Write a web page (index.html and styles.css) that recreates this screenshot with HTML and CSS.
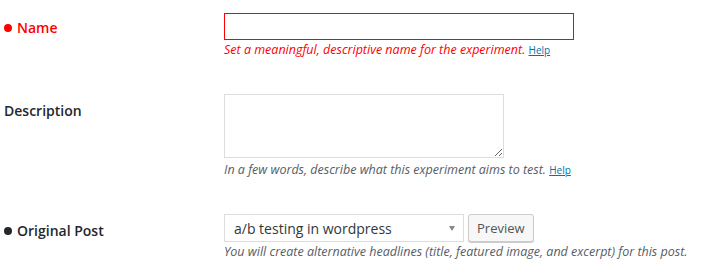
FILE: index.html
```html
<!DOCTYPE html>
<html lang="en">
  <head>
    <meta charset="UTF-8" />
    <meta name="viewport" content="width=device-width, initial-scale=1.0" />
    <title>Experiment</title>
    <link rel="stylesheet" href="styles.css">
  </head>
  <body>
    <form class="experiment-form" novalidate>
      <div class="form-row has-error">
        <label class="form-label is-required" for="exp-name">Name</label>
        <div class="form-field">
          <input type="text" id="exp-name" class="field-name" />
          <p class="form-help">
            Set a meaningful, descriptive name for the experiment.
            <a href="#">Help</a>
          </p>
        </div>
      </div>
      <div class="form-row">
        <label class="form-label" for="exp-desc">Description</label>
        <div class="form-field">
          <textarea id="exp-desc" class="field-desc"></textarea>
          <p class="form-help">
            In a few words, describe what this experiment aims to test.
            <a href="#">Help</a>
          </p>
        </div>
      </div>
      <div class="form-row">
        <label class="form-label is-required" for="exp-post">Original Post</label>
        <div class="form-field">
          <div class="post-picker">
            <div class="select-box" id="exp-post">
              <span>a/b testing in wordpress</span>
              <span class="select-arrow"></span>
            </div>
            <button type="button" class="btn">Preview</button>
          </div>
          <p class="form-help">
            You will create alternative headlines (title, featured image, and excerpt) for this post.
          </p>
        </div>
      </div>
    </form>
  </body>
</html>
```

FILE: styles.css
```css
body {
  margin: 0;
  background-color: #fff;
  font-family: 'Open Sans', 'Noto Sans', sans-serif;
  color: #23282d;
}

a {
  color: #0073aa;
}

.experiment-form {
  padding: 13px 0 0 4px;
}

.form-row {
  display: grid;
  grid-template-columns: 220px 1fr;
  margin-bottom: 35px;
}

.form-row:last-child {
  margin-bottom: 0;
}

.form-label {
  padding-top: 7px;
  font-size: 14px;
  font-weight: 600;
  line-height: 20px;
}

.form-label.is-required::before {
  content: '';
  display: inline-block;
  width: 8px;
  height: 8px;
  border-radius: 50%;
  background-color: currentColor;
  margin-right: 5px;
  vertical-align: 1px;
}

.form-row.has-error .form-label {
  padding-top: 5px;
}

.form-row.has-error .form-label,
.form-row.has-error .form-help {
  color: #f00;
}

.form-row.has-error input {
  border-color: #f00;
}

.form-field {
  white-space: nowrap;
}

.form-field input,
.form-field textarea {
  box-sizing: border-box;
  display: block;
  margin: 0;
  border: 1px solid #ddd;
  background-color: #fff;
  font: inherit;
}

.field-name {
  width: 350px;
  height: 27px;
}

.field-desc {
  width: 280px;
  height: 64px;
  margin-bottom: 3px !important;
}

.form-help {
  margin: 1px 0 0;
  font-size: 12.5px;
  font-style: italic;
  line-height: 18px;
  color: #555d66;
}

.form-help a {
  font-size: 10px;
  font-style: normal;
}

.post-picker {
  display: flex;
  align-items: flex-start;
  gap: 4px;
}

.select-box {
  box-sizing: border-box;
  display: flex;
  align-items: center;
  justify-content: space-between;
  width: 240px;
  height: 28px;
  padding: 0 8px 0 9px;
  border: 1px solid #ddd;
  font-size: 14px;
  color: #32373c;
}

.select-arrow {
  width: 0;
  height: 0;
  border-left: 3.5px solid transparent;
  border-right: 3.5px solid transparent;
  border-top: 5px solid #888;
}

.btn {
  box-sizing: border-box;
  height: 28px;
  padding: 0 8px;
  border: 1px solid #ccc;
  border-radius: 3px;
  background-color: #f7f7f7;
  box-shadow: 0 1px 0 #ccc;
  font-family: inherit;
  font-size: 13px;
  color: #555;
}
```
